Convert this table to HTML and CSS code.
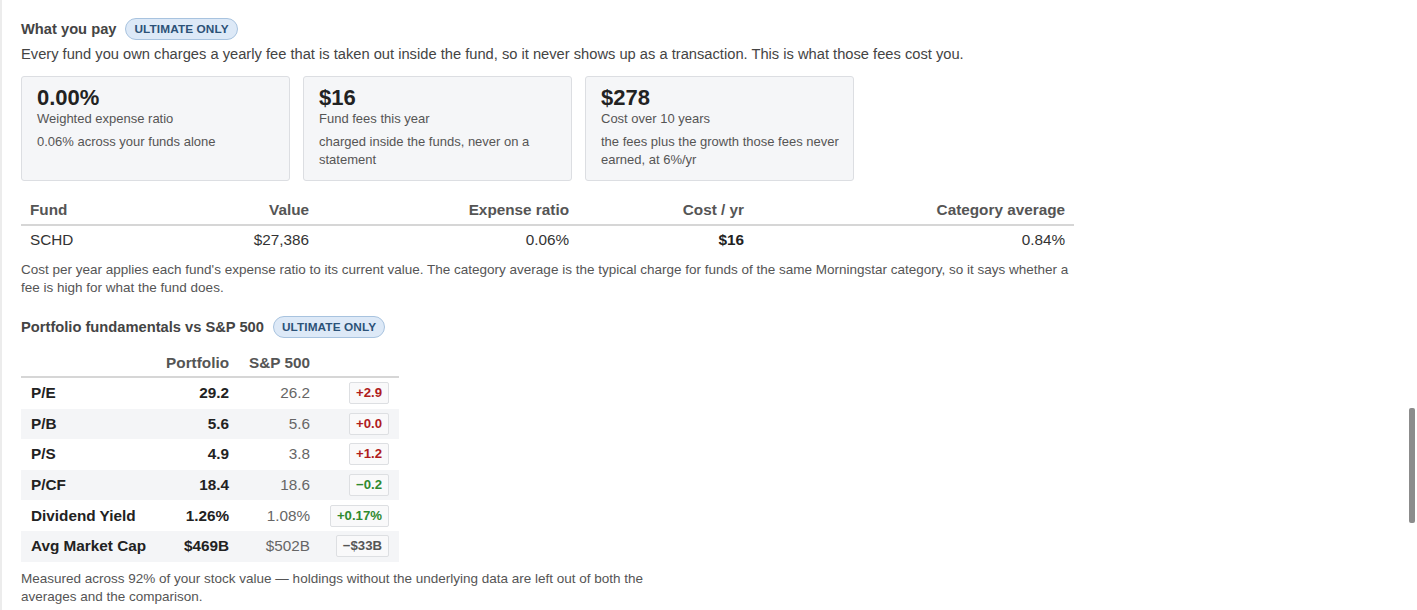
FILE: index.html
```html
<!DOCTYPE html>
<html lang="en">
<head>
<meta charset="utf-8">
<title>What you pay</title>
<link rel="stylesheet" href="styles.css">
</head>
<body>
<div class="page">
  <section class="section">
    <div class="sec-head">
      <h2 class="sec-title">What you pay</h2>
      <span class="badge">Ultimate only</span>
    </div>
    <p class="sec-desc">Every fund you own charges a yearly fee that is taken out inside the fund, so it never shows up as a transaction. This is what those fees cost you.</p>

    <div class="cards">
      <div class="card">
        <div class="card-value">0.00%</div>
        <div class="card-label">Weighted expense ratio</div>
        <div class="card-sub">0.06% across your funds alone</div>
      </div>
      <div class="card">
        <div class="card-value">$16</div>
        <div class="card-label">Fund fees this year</div>
        <div class="card-sub">charged inside the funds, never on a statement</div>
      </div>
      <div class="card">
        <div class="card-value">$278</div>
        <div class="card-label">Cost over 10 years</div>
        <div class="card-sub">the fees plus the growth those fees never earned, at 6%/yr</div>
      </div>
    </div>

    <table class="fees">
      <thead>
        <tr>
          <th class="c-fund">Fund</th>
          <th class="c-value num">Value</th>
          <th class="c-er num">Expense ratio</th>
          <th class="c-cost num">Cost / yr</th>
          <th class="c-cat num">Category average</th>
        </tr>
      </thead>
      <tbody>
        <tr>
          <td>SCHD</td>
          <td class="num">$27,386</td>
          <td class="num">0.06%</td>
          <td class="num strong">$16</td>
          <td class="num">0.84%</td>
        </tr>
      </tbody>
    </table>
    <p class="note">Cost per year applies each fund's expense ratio to its current value. The category average is the typical charge for funds of the same Morningstar category, so it says whether a fee is high for what the fund does.</p>
  </section>

  <section class="section section-2">
    <div class="sec-head">
      <h2 class="sec-title">Portfolio fundamentals vs S&amp;P 500</h2>
      <span class="badge">Ultimate only</span>
    </div>

    <table class="fund">
      <thead>
        <tr>
          <th class="f-label"></th>
          <th class="num f-port">Portfolio</th>
          <th class="num f-sp">S&amp;P 500</th>
          <th class="num f-delta"></th>
        </tr>
      </thead>
      <tbody>
        <tr><td class="lbl">P/E</td><td class="num port">29.2</td><td class="num sp">26.2</td><td class="num"><span class="delta up">+2.9</span></td></tr>
        <tr><td class="lbl">P/B</td><td class="num port">5.6</td><td class="num sp">5.6</td><td class="num"><span class="delta up">+0.0</span></td></tr>
        <tr><td class="lbl">P/S</td><td class="num port">4.9</td><td class="num sp">3.8</td><td class="num"><span class="delta up">+1.2</span></td></tr>
        <tr><td class="lbl">P/CF</td><td class="num port">18.4</td><td class="num sp">18.6</td><td class="num"><span class="delta down">&minus;0.2</span></td></tr>
        <tr><td class="lbl">Dividend Yield</td><td class="num port">1.26%</td><td class="num sp">1.08%</td><td class="num"><span class="delta down">+0.17%</span></td></tr>
        <tr><td class="lbl">Avg Market Cap</td><td class="num port">$469B</td><td class="num sp">$502B</td><td class="num"><span class="delta flat">&minus;$33B</span></td></tr>
      </tbody>
    </table>
    <p class="note note-narrow">Measured across 92% of your stock value — holdings without the underlying data are left out of both the averages and the comparison.</p>
  </section>
</div>
<div class="scroll-thumb"></div>
</body>
</html>
```

FILE: styles.css
```css
html, body {
  margin: 0;
  padding: 0;
  background: #ffffff;
}

body {
  font-family: "Liberation Sans", Arial, sans-serif;
  color: #444;
  height: 610px;
  overflow: hidden;
  position: relative;
}

.page {
  border-left: 2px solid #ececec;
  min-height: 610px;
  padding: 18px 0 0 19px;
  box-sizing: border-box;
}

.section {
  width: 1053px;
}

.section-2 {
  margin-top: 19px;
}

.sec-head {
  display: flex;
  align-items: center;
  gap: 9px;
  height: 22px;
}

.sec-title {
  margin: 0;
  font-size: 14.7px;
  font-weight: bold;
  color: #444;
}

.badge {
  display: inline-block;
  height: 20px;
  line-height: 20px;
  padding: 0 8px;
  border: 1px solid #a8c3df;
  border-radius: 11px;
  background: #dde9f7;
  color: #2c5278;
  font-size: 11.8px;
  font-weight: bold;
  text-transform: uppercase;
  letter-spacing: 0.1px;
}

.sec-desc {
  margin: 4px 0 0 0;
  font-size: 14.7px;
  line-height: 20px;
  color: #444;
  white-space: nowrap;
}

.cards {
  display: flex;
  gap: 13px;
  margin-top: 12px;
}

.card {
  width: 269px;
  height: 105px;
  box-sizing: border-box;
  background: #f5f6f8;
  border: 1px solid #dcdee2;
  border-radius: 3px;
  padding: 8px 10px 0 15px;
}

.card-value {
  font-size: 22px;
  font-weight: bold;
  color: #222;
  line-height: 26px;
}

.card-label {
  font-size: 13px;
  line-height: 16px;
  color: #555;
}

.card-sub {
  margin-top: 6px;
  font-size: 13px;
  line-height: 18px;
  color: #555;
}

table {
  border-collapse: collapse;
}

.fees {
  width: 1053px;
  margin-top: 15px;
  table-layout: fixed;
  font-size: 15.3px;
}

.fees th {
  font-weight: bold;
  color: #555;
  height: 28px;
  padding: 0 9px 0 9px;
  border-bottom: 2px solid #d6d6d6;
  text-align: left;
}

.fees td {
  height: 27px;
  padding: 0 9px;
  color: #333;
}

.num { text-align: right; }
.fees th.num { text-align: right; }
.strong { font-weight: bold; color: #222 !important; }

.c-fund { width: 132px; }
.c-value { width: 129px; }
.c-er { width: 242px; }
.c-cost { width: 157px; }
.c-cat { width: 303px; }

.note {
  margin: 8px 0 0 0;
  font-size: 13.5px;
  line-height: 18px;
  color: #555;
}

.note-narrow {
  width: 660px;
  margin-top: 8px;
}

.fund {
  margin-top: 11px;
  width: 378px;
  font-size: 15.3px;
}

.fund th {
  font-weight: bold;
  color: #555;
  height: 27px;
  padding: 0;
  border-bottom: 2px solid #d6d6d6;
}

.f-label { width: 132px; }
.f-port { width: 76px; }
.f-sp { width: 81px; }
.f-delta { width: 89px; }

.fund td {
  height: 30.6px;
  padding: 0;
}

.fund tbody tr:nth-child(even) td {
  background: #f4f5f7;
}

.fund .lbl {
  padding-left: 10px;
  font-weight: bold;
  color: #222;
}

.fund .port {
  font-weight: bold;
  color: #222;
}

.fund .sp {
  color: #666;
}

.fund td:last-child {
  padding-right: 10px;
}

.delta {
  display: inline-block;
  height: 20px;
  line-height: 20px;
  padding: 0 6px;
  border: 1px solid #dddfe2;
  border-radius: 2px;
  background: #f9f9fa;
  font-size: 13.2px;
  font-weight: bold;
  vertical-align: middle;
}

.delta.up { color: #b01c1c; }
.delta.down { color: #2f8a2f; }
.delta.flat { color: #555; }

.scroll-thumb {
  position: absolute;
  left: 1409px;
  top: 408px;
  width: 6px;
  height: 115px;
  background: #8c8c8c;
  border-radius: 2px;
}
```
